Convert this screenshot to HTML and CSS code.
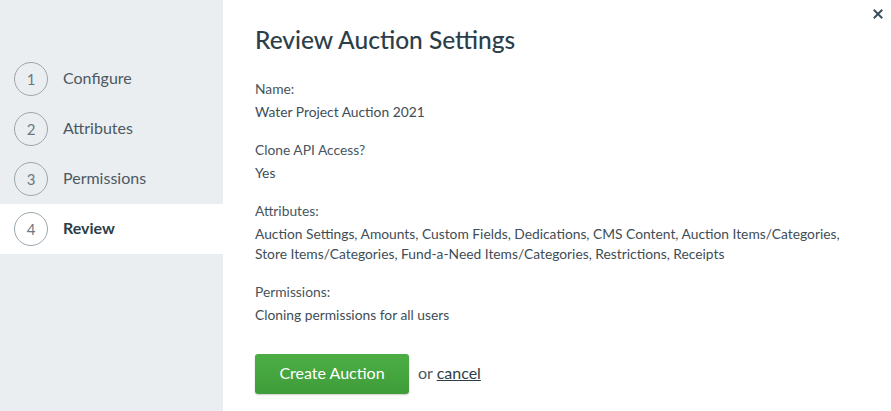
FILE: index.html
```html
<!DOCTYPE html>
<html>
<head>
<meta charset="utf-8">
<link rel="stylesheet" href="styles.css">
</head>
<body>
<div class="modal">
  <aside class="steps">
    <div class="step"><span class="num">1</span><span class="label">Configure</span></div>
    <div class="step"><span class="num">2</span><span class="label">Attributes</span></div>
    <div class="step"><span class="num">3</span><span class="label">Permissions</span></div>
    <div class="step active"><span class="num">4</span><span class="label">Review</span></div>
  </aside>
  <main class="content">
    <h1 class="title">Review Auction Settings</h1>
    <div class="field">
      <div class="field-label">Name:</div>
      <div class="field-value">Water Project Auction 2021</div>
    </div>
    <div class="field">
      <div class="field-label">Clone API Access?</div>
      <div class="field-value">Yes</div>
    </div>
    <div class="field">
      <div class="field-label">Attributes:</div>
      <div class="field-value">Auction Settings, Amounts, Custom Fields, Dedications, CMS Content, Auction Items/Categories,<br>Store Items/Categories, Fund-a-Need Items/Categories, Restrictions, Receipts</div>
    </div>
    <div class="field">
      <div class="field-label">Permissions:</div>
      <div class="field-value">Cloning permissions for all users</div>
    </div>
    <div class="actions">
      <button class="btn-create">Create Auction</button>
      <span class="or">or <a class="cancel" href="#">cancel</a></span>
    </div>
  </main>
  <button class="close" aria-label="Close">
    <svg width="10" height="10" viewBox="0 0 10 10"><path d="M1.5 1.5L8.5 8.5M8.5 1.5L1.5 8.5" stroke="#3b4f5c" stroke-width="2" stroke-linecap="square"/></svg>
  </button>
</div>
</body>
</html>
```
FILE: styles.css
```css
* { box-sizing: border-box; }
html, body { margin: 0; padding: 0; background: #fff; }
body {
  font-family: "Lato", "Open Sans", sans-serif;
  color: #3e4d56;
  width: 891px;
  height: 411px;
  overflow: hidden;
}
.modal {
  position: relative;
  display: flex;
  height: 411px;
}
.steps {
  width: 223px;
  flex: none;
  background: #ebeef0;
  padding-top: 54px;
}
.step {
  height: 50px;
  display: flex;
  align-items: center;
  padding-left: 14px;
}
.step.active { background: #fff; }
.num {
  width: 34px;
  height: 34px;
  border: 1px solid #9aa6ad;
  border-radius: 50%;
  display: flex;
  align-items: center;
  justify-content: center;
  font-size: 15px;
  color: #6a7880;
  margin-right: 15px;
  flex: none;
}
.label {
  font-size: 16px;
  line-height: 20px;
  margin-top: -2px;
  color: #4b5962;
}
.step.active .label {
  font-weight: 700;
  color: #2d3d47;
}
.content {
  flex: 1;
  padding: 25px 0 0 32px;
}
.title {
  margin: 0 0 24px;
  font-size: 24.5px;
  line-height: 30px;
  font-weight: 500;
  color: #2c3e49;
}
.field {
  font-size: 13.8px;
  line-height: 20px;
  margin-bottom: 18px;
}
.field-label { margin-bottom: 3px; color: #46555e; }
.field-value { color: #3e4d56; }
.actions {
  margin-top: 29px;
  display: flex;
  align-items: center;
}
.btn-create {
  width: 154px;
  height: 40px;
  border: none;
  border-radius: 3px;
  background: linear-gradient(#4cad45, #3f9d39);
  color: #fff;
  font-family: inherit;
  font-size: 16px;
  line-height: 20px;
  padding: 0 0 3px;
  box-shadow: 0 1px 2px rgba(0,0,0,0.2);
}
.or {
  margin-left: 9px;
  margin-top: -3px;
  font-size: 16px;
  color: #4b5962;
}
.cancel {
  color: #2d3d47;
  text-decoration: underline;
}
.close {
  position: absolute;
  top: 9px;
  right: 8px;
  width: 10px;
  height: 10px;
  padding: 0;
  border: none;
  background: none;
  display: flex;
}
```
